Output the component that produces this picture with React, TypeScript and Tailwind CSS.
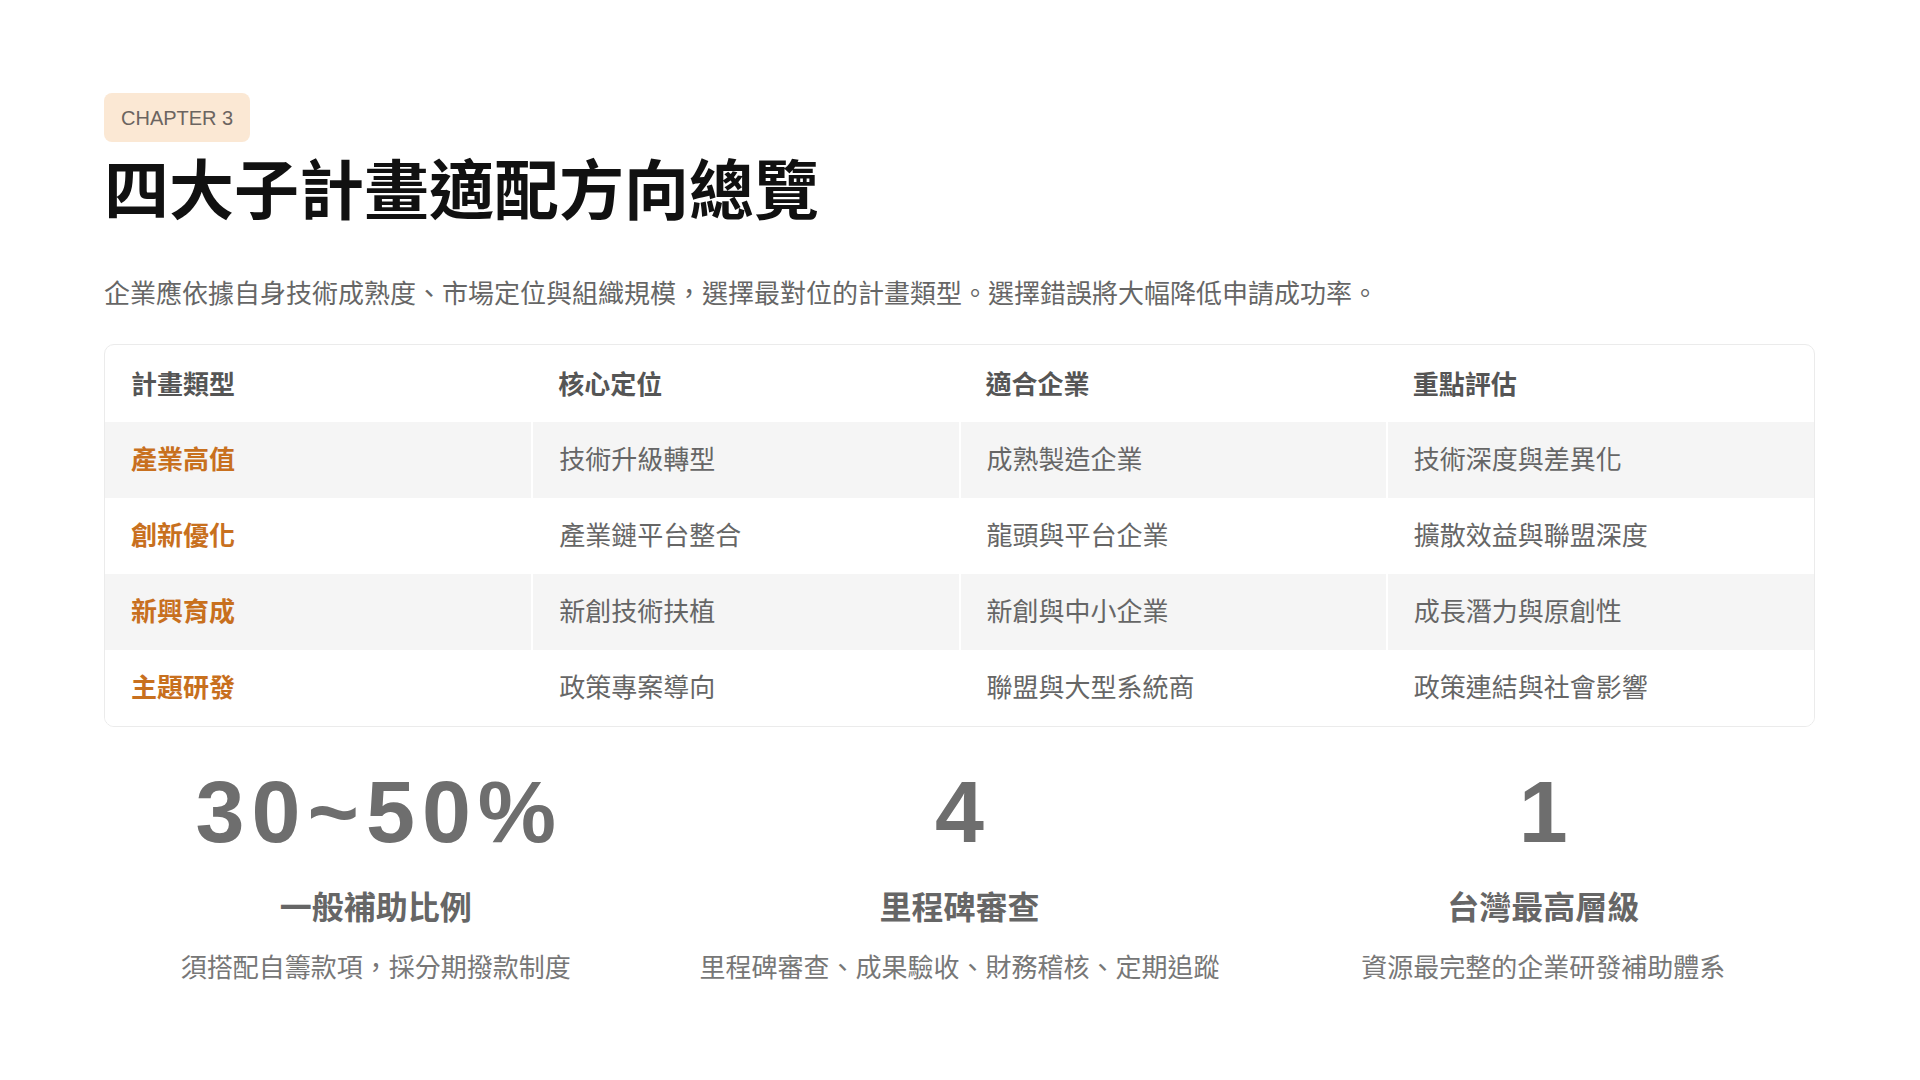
import React from "react";

const rows = [
  { type: "產業高值", core: "技術升級轉型", fit: "成熟製造企業", focus: "技術深度與差異化" },
  { type: "創新優化", core: "產業鏈平台整合", fit: "龍頭與平台企業", focus: "擴散效益與聯盟深度" },
  { type: "新興育成", core: "新創技術扶植", fit: "新創與中小企業", focus: "成長潛力與原創性" },
  { type: "主題研發", core: "政策專案導向", fit: "聯盟與大型系統商", focus: "政策連結與社會影響" },
];

const stats = [
  { value: "30~50%", label: "一般補助比例", desc: "須搭配自籌款項，採分期撥款制度" },
  { value: "4", label: "里程碑審查", desc: "里程碑審查、成果驗收、財務稽核、定期追蹤" },
  { value: "1", label: "台灣最高層級", desc: "資源最完整的企業研發補助體系" },
];

const font = { fontFamily: '"Liberation Sans", "Noto Sans CJK TC", sans-serif' };

export default function App() {
  return (
    <div className="w-[1920px] h-[1080px] bg-white overflow-hidden" style={font}>
      <div className="pl-[104px] pr-[105px] pt-[93px]">
        {/* CHAPTER BADGE */}
        <div className="inline-flex h-[49px] items-center px-[17px] rounded-[8px] bg-[#fbe8d4] text-[20px] text-[#6b6460]">
          CHAPTER 3
        </div>

        <h1 className="mt-[11px] text-[65px] leading-[77px] font-bold text-[#111]">
          四大子計畫適配方向總覽
        </h1>

        <p className="mt-[45px] text-[26px] leading-[39px] text-[#666]">
          企業應依據自身技術成熟度、市場定位與組織規模，選擇最對位的計畫類型。選擇錯誤將大幅降低申請成功率。
        </p>

        {/* TABLE */}
        <div className="mt-[30px] border border-[#ebebeb] rounded-[10px] overflow-hidden">
          <table className="w-full table-fixed border-collapse">
            <thead>
              <tr className="h-[77px]">
                {["計畫類型", "核心定位", "適合企業", "重點評估"].map((h) => (
                  <th key={h} className="px-[26px] pt-[3px] text-left text-[26px] font-bold text-[#555]">
                    {h}
                  </th>
                ))}
              </tr>
            </thead>
            <tbody>
              {rows.map((r, i) => (
                <tr key={r.type} className={`h-[76px] ${i % 2 === 0 ? "bg-[#f5f5f5]" : "bg-white"}`}>
                  <td className="px-[26px] text-[26px] font-bold text-[#c8701e] border-r-2 border-white">
                    {r.type}
                  </td>
                  <td className="px-[26px] text-[26px] text-[#666] border-r-2 border-white">{r.core}</td>
                  <td className="px-[26px] text-[26px] text-[#666] border-r-2 border-white">{r.fit}</td>
                  <td className="px-[26px] text-[26px] text-[#666]">{r.focus}</td>
                </tr>
              ))}
            </tbody>
          </table>
        </div>

        {/* STATS */}
        <div className="mt-[41px] grid grid-cols-3 gap-10">
          {stats.map((s) => (
            <div key={s.label} className="flex flex-col items-center text-center">
              <div className="pl-[0.08em] text-[88px] leading-[88px] font-bold tracking-[0.08em] text-[#6e6e6e]">
                {s.value}
              </div>
              <div className="mt-[31px] text-[32px] leading-[42px] font-bold text-[#666]">{s.label}</div>
              <div className="mt-[21px] text-[26px] leading-[36px] text-[#777]">{s.desc}</div>
            </div>
          ))}
        </div>
      </div>
    </div>
  );
}
